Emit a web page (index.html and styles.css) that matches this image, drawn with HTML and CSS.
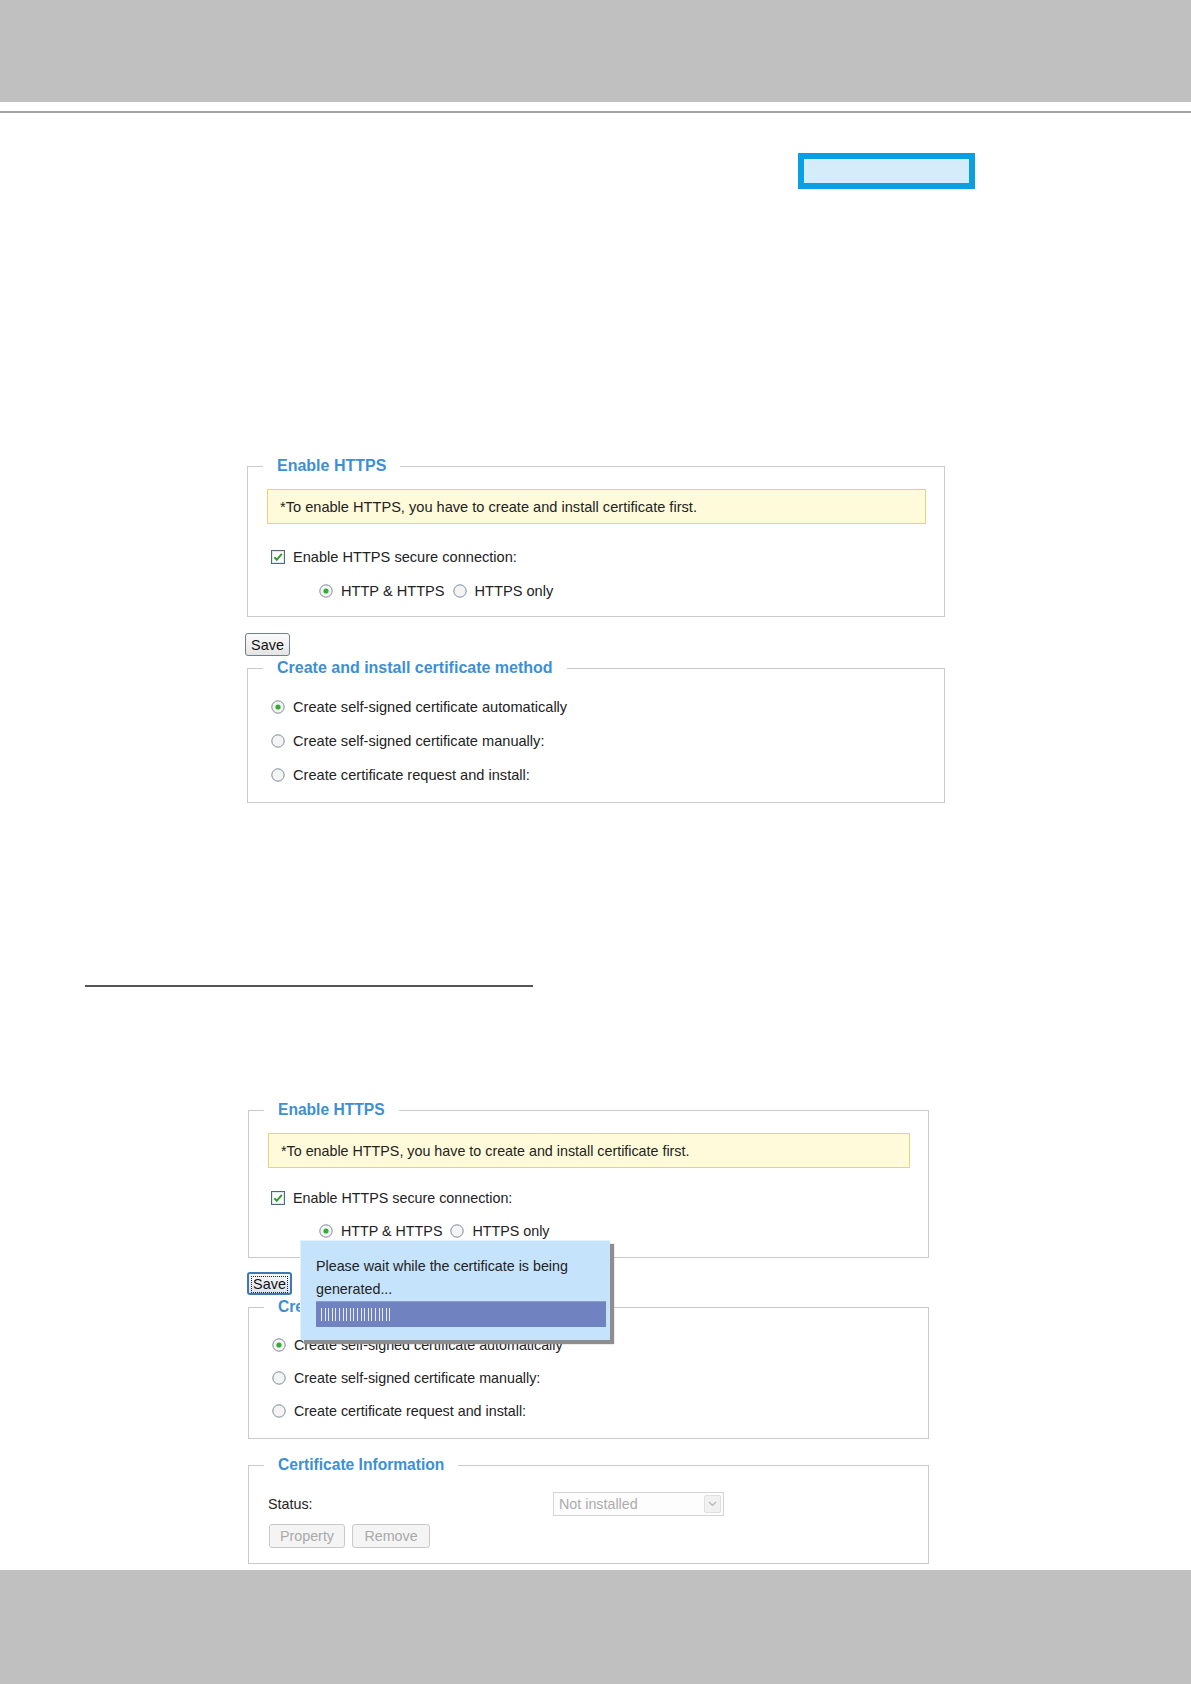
FILE: index.html
```html
<!DOCTYPE html>
<html lang="en">
<head>
<meta charset="utf-8">
<title>HTTPS</title>
<link rel="stylesheet" href="styles.css">
</head>
<body>
<header class="top-band"></header>
<div class="top-rule"></div>
<div class="tag-box"></div>

<section class="shot shot-a">
  <fieldset class="group group-a1">
    <legend>Enable HTTPS</legend>
    <div class="note">*To enable HTTPS, you have to create and install certificate first.</div>
    <div class="row row-check">
      <svg class="ico" width="14" height="14" viewBox="0 0 14 14"><rect x="0.5" y="0.5" width="13" height="13" fill="#fff" stroke="#4d6a80"/><rect x="1.5" y="1.5" width="11" height="11" fill="none" stroke="#dfe6ec"/><path d="M3.3 7.2 L5.8 9.8 L10.8 3.8" fill="none" stroke="#2f9e2f" stroke-width="2"/></svg>
      <span>Enable HTTPS secure connection:</span>
    </div>
    <div class="row row-inline">
      <svg class="ico" width="14" height="14" viewBox="0 0 14 14"><circle cx="7" cy="7" r="6.2" fill="#f4f4f4" stroke="#7d8c9a"/><circle cx="7" cy="7" r="2.6" fill="#35ad35"/></svg>
      <span class="lbl">HTTP &amp; HTTPS</span>
      <svg class="ico ico-gap" width="14" height="14" viewBox="0 0 14 14"><circle cx="7" cy="7" r="6.2" fill="#f4f4f4" stroke="#7d8c9a"/></svg>
      <span class="lbl">HTTPS only</span>
    </div>
  </fieldset>
  <button class="btn btn-save">Save</button>
  <fieldset class="group group-a2">
    <legend>Create and install certificate method</legend>
    <div class="radio-list">
      <div class="row row-list"><svg class="ico" width="14" height="14" viewBox="0 0 14 14"><circle cx="7" cy="7" r="6.2" fill="#f4f4f4" stroke="#7d8c9a"/><circle cx="7" cy="7" r="2.6" fill="#35ad35"/></svg><span>Create self-signed certificate automatically</span></div>
      <div class="row row-list"><svg class="ico" width="14" height="14" viewBox="0 0 14 14"><circle cx="7" cy="7" r="6.2" fill="#f4f4f4" stroke="#7d8c9a"/></svg><span>Create self-signed certificate manually:</span></div>
      <div class="row row-list"><svg class="ico" width="14" height="14" viewBox="0 0 14 14"><circle cx="7" cy="7" r="6.2" fill="#f4f4f4" stroke="#7d8c9a"/></svg><span>Create certificate request and install:</span></div>
    </div>
  </fieldset>
</section>

<div class="dark-rule"></div>

<section class="shot shot-b">
  <fieldset class="group group-b1">
    <legend>Enable HTTPS</legend>
    <div class="note">*To enable HTTPS, you have to create and install certificate first.</div>
    <div class="row row-check">
      <svg class="ico" width="14" height="14" viewBox="0 0 14 14"><rect x="0.5" y="0.5" width="13" height="13" fill="#fff" stroke="#4d6a80"/><rect x="1.5" y="1.5" width="11" height="11" fill="none" stroke="#dfe6ec"/><path d="M3.3 7.2 L5.8 9.8 L10.8 3.8" fill="none" stroke="#2f9e2f" stroke-width="2"/></svg>
      <span>Enable HTTPS secure connection:</span>
    </div>
    <div class="row row-inline">
      <svg class="ico" width="14" height="14" viewBox="0 0 14 14"><circle cx="7" cy="7" r="6.2" fill="#f4f4f4" stroke="#7d8c9a"/><circle cx="7" cy="7" r="2.6" fill="#35ad35"/></svg>
      <span class="lbl">HTTP &amp; HTTPS</span>
      <svg class="ico ico-gap" width="14" height="14" viewBox="0 0 14 14"><circle cx="7" cy="7" r="6.2" fill="#f4f4f4" stroke="#7d8c9a"/></svg>
      <span class="lbl">HTTPS only</span>
    </div>
  </fieldset>
  <button class="btn btn-save btn-focus"><span class="focus-ring">Save</span></button>
  <fieldset class="group group-b2">
    <legend>Create and install certificate method</legend>
    <div class="radio-list">
      <div class="row row-list"><svg class="ico" width="14" height="14" viewBox="0 0 14 14"><circle cx="7" cy="7" r="6.2" fill="#f4f4f4" stroke="#7d8c9a"/><circle cx="7" cy="7" r="2.6" fill="#35ad35"/></svg><span>Create self-signed certificate automatically</span></div>
      <div class="row row-list"><svg class="ico" width="14" height="14" viewBox="0 0 14 14"><circle cx="7" cy="7" r="6.2" fill="#f4f4f4" stroke="#7d8c9a"/></svg><span>Create self-signed certificate manually:</span></div>
      <div class="row row-list"><svg class="ico" width="14" height="14" viewBox="0 0 14 14"><circle cx="7" cy="7" r="6.2" fill="#f4f4f4" stroke="#7d8c9a"/></svg><span>Create certificate request and install:</span></div>
    </div>
  </fieldset>
  <fieldset class="group group-b3">
    <legend>Certificate Information</legend>
    <div class="status-row">
      <span class="status-label">Status:</span>
      <div class="select">
        <span class="select-text">Not installed</span>
        <span class="select-arrow"><svg width="9" height="6" viewBox="0 0 9 6"><path d="M1 1 L4.5 4.5 L8 1" fill="none" stroke="#b5b5b5" stroke-width="1.2"/></svg></span>
      </div>
    </div>
    <div class="btn-row">
      <button class="btn-dis btn-prop">Property</button>
      <button class="btn-dis btn-rem">Remove</button>
    </div>
  </fieldset>

  <div class="popup">
    <p class="popup-text">Please wait while the certificate is being<br>generated...</p>
    <div class="progress"><div class="progress-fill"></div></div>
  </div>
</section>

<footer class="bottom-band"></footer>
</body>
</html>
```

FILE: styles.css
```css
html, body {
  margin: 0;
  padding: 0;
  background: #ffffff;
}

body {
  font-family: "Liberation Sans", Arial, sans-serif;
  color: #222222;
  width: 1191px;
  overflow: hidden;
}

.top-band {
  display: block;
  height: 102px;
  background: #c0c0c0;
}

.top-rule {
  margin-top: 9px;
  height: 2px;
  background: #a3a3a3;
}

.tag-box {
  margin-top: 40px;
  margin-left: 798px;
  width: 177px;
  height: 36px;
  box-sizing: border-box;
  border: 6px solid #0a9fe2;
  background: #d5ecfb;
}

.shot {
  position: relative;
}

.shot-a {
  margin-top: 267px;
  margin-left: 245px;
  font-size: 14.6px;
}

.shot-b {
  margin-top: 113px;
  margin-left: 247px;
  font-size: 14.3px;
}

.group {
  margin: 0;
  padding: 0;
  min-width: 0;
  border: 1px solid #cacaca;
  box-sizing: border-box;
}

.group legend {
  margin-left: 15px;
  padding: 0 14px;
  font-weight: bold;
  font-size: 16px;
  line-height: 20px;
  color: #3d8fd5;
}

.shot-b .group legend {
  font-size: 15.6px;
}

.group-a1,
.group-a2 {
  margin-left: 2px;
  width: 698px;
}

.group-b1,
.group-b2,
.group-b3 {
  margin-left: 1px;
  width: 681px;
}

.note {
  display: flex;
  align-items: center;
  height: 35px;
  box-sizing: border-box;
  margin: 13px 18px 0 19px;
  padding-left: 12px;
  background: #fffbda;
  border: 1px solid #e6d47c;
  color: #222;
}

.row {
  display: flex;
  align-items: center;
  height: 20px;
  line-height: 20px;
  white-space: nowrap;
}

.ico {
  flex: none;
  display: block;
}

.row-check {
  margin-top: 23px;
  padding-left: 23px;
  gap: 8px;
}

.row-inline {
  margin-top: 14px;
  padding-left: 71px;
}

.row-inline .lbl {
  margin-left: 8px;
}

.ico-gap {
  margin-left: 8px;
}

.group-a1 {
  padding-bottom: 15px;
}

.group-b1 .row-check {
  margin-top: 20px;
  padding-left: 22px;
}

.group-b1 .row-inline {
  margin-top: 13px;
  padding-left: 70px;
}

.group-b1 {
  padding-bottom: 16px;
}

.btn {
  display: block;
  font-family: "Liberation Sans", Arial, sans-serif;
  font-size: 14.4px;
  color: #111;
  padding: 0;
  box-sizing: border-box;
  background: linear-gradient(#fbfbfb, #e4e4e4);
  border: 1px solid #6f7f8e;
  border-radius: 3px;
}

.btn-save {
  width: 45px;
  height: 23px;
  margin-top: 16px;
}

.btn-focus {
  width: 45px;
  margin-top: 14px;
  border: 2px solid #3f79b3;
  background: linear-gradient(#f6f8fa, #dde4ec);
}

.focus-ring {
  display: inline-block;
  line-height: 15px;
  padding: 0 1px;
  outline: 1px dotted #222;
}

.group-a2,
.group-b2 {
  margin-top: 2px;
}

.radio-list {
  display: flex;
  flex-direction: column;
}

.row-list {
  height: 34px;
  padding-left: 23px;
  gap: 8px;
}

.group-a2 .radio-list {
  margin-top: 12px;
}

.group-a2 {
  padding-bottom: 10px;
}

.group-b2 .radio-list {
  margin-top: 11px;
}

.group-b2 .row-list {
  height: 33px;
}

.group-b2 {
  padding-bottom: 11px;
}

.group-b3 {
  margin-top: 16px;
  padding-bottom: 15px;
}

.status-row {
  display: flex;
  align-items: center;
  margin-top: 17px;
  height: 24px;
  padding-left: 19px;
}

.status-label {
  width: 285px;
  flex: none;
}

.select {
  display: flex;
  align-items: center;
  justify-content: space-between;
  width: 171px;
  height: 24px;
  box-sizing: border-box;
  border: 1px solid #d4d4d4;
  background: #fdfdfd;
  padding: 0 2px 0 5px;
}

.select-text {
  color: #ababab;
}

.select-arrow {
  display: flex;
  align-items: center;
  justify-content: center;
  width: 17px;
  height: 18px;
  box-sizing: border-box;
  border: 1px solid #e0e0e0;
  border-radius: 2px;
  background: #f1f1f1;
}

.btn-row {
  display: flex;
  gap: 7px;
  margin-top: 8px;
  padding-left: 20px;
}

.btn-dis {
  height: 24px;
  padding: 0;
  box-sizing: border-box;
  font-family: "Liberation Sans", Arial, sans-serif;
  font-size: 14.3px;
  color: #a9a9a9;
  background: #f4f4f4;
  border: 1px solid #c9c9c9;
  border-radius: 3px;
}

.btn-prop {
  width: 76px;
}

.btn-rem {
  width: 78px;
}

.popup {
  position: absolute;
  left: 53px;
  top: 140px;
  width: 310px;
  height: 100px;
  box-sizing: border-box;
  padding: 14px 4px 0 15px;
  background: #c5e4fb;
  border-top: 1px solid #e4f2fd;
  border-left: 1px solid #e4f2fd;
  box-shadow: 4px 4px 1px #8e8e8e;
}

.popup-text {
  margin: 0;
  line-height: 23px;
  color: #222;
}

.progress {
  height: 26px;
  box-sizing: border-box;
  background: #7182c0;
  border-top: 1px solid #8e9bd0;
  padding: 6px 0 0 5px;
}

.progress-fill {
  width: 72px;
  height: 13px;
  background: repeating-linear-gradient(90deg, #e9ecf8 0 1px, transparent 1px 3.6px);
}

.dark-rule {
  margin-top: 182px;
  margin-left: 85px;
  width: 448px;
  height: 2px;
  background: #555555;
}

.bottom-band {
  display: block;
  margin-top: 6px;
  height: 114px;
  background: #c0c0c0;
}
```
